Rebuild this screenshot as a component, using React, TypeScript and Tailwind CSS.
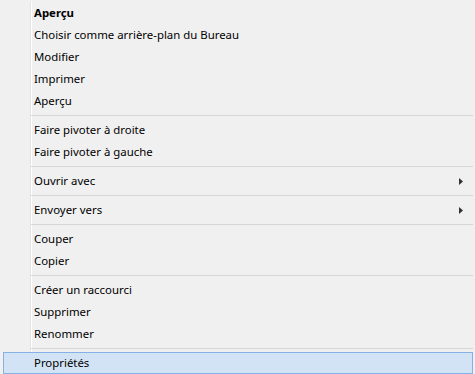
import { Fragment } from "react"

type Item = { label: string; bold?: boolean; sub?: boolean; active?: boolean }

const groups: Item[][] = [
  [
    { label: "Aperçu", bold: true },
    { label: "Choisir comme arrière-plan du Bureau" },
    { label: "Modifier" },
    { label: "Imprimer" },
    { label: "Aperçu" },
  ],
  [{ label: "Faire pivoter à droite" }, { label: "Faire pivoter à gauche" }],
  [{ label: "Ouvrir avec", sub: true }],
  [{ label: "Envoyer vers", sub: true }],
  [{ label: "Couper" }, { label: "Copier" }],
  [{ label: "Créer un raccourci" }, { label: "Supprimer" }, { label: "Renommer" }],
  [{ label: "Propriétés", active: true }],
]

function Row({ item }: { item: Item }) {
  if (item.active) {
    return (
      <div className="-ml-[28px] mr-[2px] flex h-[22px] items-center border border-[#84b2e6] bg-[#d1e3f4] pl-[30px] text-[#000]">
        <span>{item.label}</span>
      </div>
    )
  }
  return (
    <div className="flex h-[22px] items-center pl-[3px] pr-[12px]">
      <span className={item.bold ? "font-bold" : ""}>{item.label}</span>
      {item.sub && (
        <svg className="ml-auto" width="4" height="7" viewBox="0 0 4 7">
          <path d="M0 0 L4 3.5 L0 7 Z" fill="#333" />
        </svg>
      )}
    </div>
  )
}

export default function App() {
  return (
    <div
      className="h-[374px] w-[475px] overflow-hidden bg-[#f0f0f0] pt-[2px] text-[11.4px] leading-[22px] text-black"
      style={{ fontFamily: '"Segoe UI", "Noto Sans", sans-serif' }}
    >
      <div className="ml-[30px] flex flex-col border-l border-[#e2e3e3] shadow-[inset_1px_0_0_#ffffff]">
        {groups.map((g, i) => (
          <Fragment key={i}>
            {i > 0 && (
              <div className="flex h-[7px] items-center pr-[2px]">
                <div className="h-px w-full bg-[#d7d7d7]" />
              </div>
            )}
            {g.map((item, j) => (
              <Row key={j} item={item} />
            ))}
          </Fragment>
        ))}
      </div>
    </div>
  )
}
